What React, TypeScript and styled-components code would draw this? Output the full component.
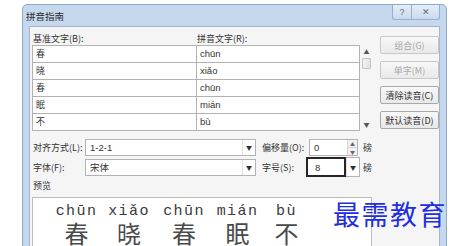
import styled, { createGlobalStyle } from "styled-components";

const GlobalStyle = createGlobalStyle`
    html, body {
        margin: 0;
        padding: 0;
        background: #ffffff;
        overflow: hidden;
    }
    * {
        box-sizing: border-box;
    }
`;

const UI_FONT = `"Noto Sans CJK SC", "Liberation Sans", sans-serif`;

const Screen = styled.div`
    position: relative;
    width: 454px;
    height: 246px;
    overflow: hidden;
    padding: 4px 0 0 22px;
    background: #ffffff;
    font-family: ${UI_FONT};
    font-size: 9px;
    color: #333;
`;

const Frame = styled.div`
    width: 425px;
    height: 270px;
    display: flex;
    flex-direction: column;
    padding: 0 6px;
    background: #c6d8ee;
    border: 1px solid #8fa9ca;
    border-radius: 5px 5px 0 0;
`;

const TitleBar = styled.div`
    height: 21px;
    display: flex;
    justify-content: space-between;
    align-items: flex-start;
`;

const Title = styled.div`
    margin: 5px 0 0 -3px;
    font-size: 9.5px;
    line-height: 12px;
    color: #2a2a2a;
`;

const TitleButtons = styled.div`
    display: flex;
`;

const TitleButton = styled.div<{ $w: number }>`
    width: ${(p) => p.$w}px;
    height: 15px;
    display: flex;
    align-items: center;
    justify-content: center;
    font-family: "Liberation Sans", sans-serif;
    font-size: 9px;
    color: #5a6d86;
    background: linear-gradient(#e4edf8, #cbdaee);
    border: 1px solid #98afcd;
    border-top: none;
    & + & {
        border-left: none;
    }
    &:first-child {
        border-bottom-left-radius: 3px;
    }
    &:last-child {
        border-bottom-right-radius: 3px;
    }
`;

const Content = styled.div`
    flex: 1;
    background: #f5f5f5;
    border: 1px solid #a3b7d1;
    border-bottom: none;
    padding: 6px 0 0 2px;
`;

const TopSection = styled.div`
    display: flex;
    gap: 7px;
`;

const LeftCol = styled.div`
    width: 341px;
`;

const LabelRow = styled.div`
    display: grid;
    grid-template-columns: 164px 164px;
    height: 12px;
    line-height: 12px;
`;

const Label = styled.span`
    padding-left: 1px;
    white-space: nowrap;
`;

const TableWrap = styled.div`
    display: flex;
`;

const Table = styled.div`
    width: 328px;
    display: grid;
    grid-template-columns: 164px 1fr;
    grid-auto-rows: 17px;
    border-left: 1px solid #b2b2b2;
    border-top: 1px solid #b2b2b2;
    background: #ffffff;
`;

const Cell = styled.div<{ $latin?: boolean }>`
    border-right: 1px solid #b2b2b2;
    border-bottom: 1px solid #b2b2b2;
    padding-left: 3px;
    line-height: 16px;
    font-family: ${(p) => (p.$latin ? `"Liberation Sans", sans-serif` : UI_FONT)};
    font-size: ${(p) => (p.$latin ? 9.5 : 9)}px;
    color: #333;
`;

const ScrollBar = styled.div`
    width: 13px;
    height: 86px;
    display: flex;
    flex-direction: column;
    align-items: center;
    padding: 3px 0;
    font-size: 6px;
    color: #555;
`;

const ScrollThumb = styled.div`
    width: 9px;
    height: 11px;
    margin-top: 3px;
    border: 1px solid #c4c4c4;
    background: linear-gradient(90deg, #f2f2f2, #e2e2e2);
    border-radius: 1px;
`;

const ScrollSpace = styled.div`
    flex: 1;
`;

const ScrollArrow = styled.span`
    line-height: 7px;
`;

const ButtonCol = styled.div`
    width: 59px;
    padding-top: 3px;
    display: flex;
    flex-direction: column;
    gap: 7px;
`;

const Button = styled.div<{ $disabled?: boolean }>`
    height: 18px;
    display: flex;
    align-items: center;
    justify-content: center;
    font-size: 9px;
    color: ${(p) => (p.$disabled ? "#a8a8a8" : "#2e2e2e")};
    border: 1px solid ${(p) => (p.$disabled ? "#c8c8c8" : "#a8a8a8")};
    border-radius: 2px;
    background: linear-gradient(#f8f8f8, #e9e9e9);
    white-space: nowrap;
`;

const Options = styled.div`
    margin-top: 6px;
    padding-left: 1px;
    display: grid;
    grid-template-columns: 52px 171px 50px 54px auto;
    grid-auto-rows: 20px;
    align-items: center;
`;

const OptLabel = styled.span<{ $pad?: number }>`
    padding-left: ${(p) => p.$pad ?? 0}px;
    white-space: nowrap;
`;

const Combo = styled.div<{ $h?: number }>`
    height: ${(p) => p.$h ?? 17}px;
    display: flex;
    background: #ffffff;
    border: 1px solid #b1b3b8;
`;

const ComboText = styled.div<{ $focus?: boolean }>`
    flex: 1;
    display: flex;
    align-items: center;
    padding-left: ${(p) => (p.$focus ? 7 : 4)}px;
    font-family: "Liberation Sans", ${UI_FONT};
    font-size: 9.5px;
    color: #333;
    ${(p) => p.$focus && `border: 2px solid #262626; margin: -1px 0 -1px -1px;`}
`;

const DropButton = styled.div`
    width: 13px;
    display: flex;
    align-items: center;
    justify-content: center;
    border-left: 1px solid #e2e2e2;
    font-size: 6px;
    color: #333;
`;

const SpinBox = styled.div`
    margin-left: 3px;
    height: 17px;
    width: 49px;
    display: flex;
    background: #ffffff;
    border: 1px solid #b1b3b8;
`;

const SpinButtons = styled.div`
    width: 10px;
    display: flex;
    flex-direction: column;
    border-left: 1px solid #d6d6d6;
`;

const SpinHalf = styled.div`
    flex: 1;
    display: flex;
    align-items: center;
    justify-content: center;
    font-size: 5px;
    color: #666;
    background: #f1f1f1;
    & + & {
        border-top: 1px solid #d6d6d6;
    }
`;

const Unit = styled.span`
    padding-left: 3px;
`;

const PreviewLabel = styled.div`
    margin-top: 3px;
    padding-left: 1px;
    height: 12px;
    line-height: 12px;
`;

const Preview = styled.div`
    margin-top: 5px;
    width: 340px;
    height: 60px;
    display: flex;
    padding: 6px 0 0 18px;
    background: #ffffff;
    border: 1px solid #bcbcbc;
`;

const Ruby = styled.div<{ $w: number }>`
    width: ${(p) => p.$w}px;
    display: flex;
    flex-direction: column;
    align-items: center;
`;

const Pinyin = styled.span`
    font-family: "Liberation Mono", monospace;
    font-size: 15px;
    line-height: 16px;
    letter-spacing: 1.4px;
    color: #3a3a3a;
`;

const Hanzi = styled.span`
    font-family: "Noto Sans CJK SC", sans-serif;
    font-size: 24px;
    line-height: 25px;
    color: #4a4a4a;
`;

const Watermark = styled.div`
    position: absolute;
    left: 333px;
    top: 199px;
    font-family: "Noto Sans CJK SC", sans-serif;
    font-size: 27px;
    line-height: 30px;
    letter-spacing: 1.5px;
    color: #1f2fe0;
`;

const rows = [
    ["春", "chūn"],
    ["晓", "xiǎo"],
    ["春", "chūn"],
    ["眠", "mián"],
    ["不", "bù"],
];

const preview = [
    { py: "chūn", hz: "春", w: 51 },
    { py: "xiǎo", hz: "晓", w: 54 },
    { py: "chūn", hz: "春", w: 56 },
    { py: "mián", hz: "眠", w: 51 },
    { py: "bù", hz: "不", w: 47 },
];

export default function App() {
    return (
        <Screen>
            <GlobalStyle />
            <Frame>
                <TitleBar>
                    <Title>拼音指南</Title>
                    <TitleButtons>
                        <TitleButton $w={20}>?</TitleButton>
                        <TitleButton $w={28}>✕</TitleButton>
                    </TitleButtons>
                </TitleBar>
                <Content>
                    <TopSection>
                        <LeftCol>
                            <LabelRow>
                                <Label>基准文字(B):</Label>
                                <Label>拼音文字(R):</Label>
                            </LabelRow>
                            <TableWrap>
                                <Table>
                                    {rows.flatMap(([hz, py], i) => [
                                        <Cell key={"h" + i}>{hz}</Cell>,
                                        <Cell key={"p" + i} $latin>{py}</Cell>,
                                    ])}
                                </Table>
                                <ScrollBar>
                                    <ScrollArrow>▲</ScrollArrow>
                                    <ScrollThumb />
                                    <ScrollSpace />
                                    <ScrollArrow>▼</ScrollArrow>
                                </ScrollBar>
                            </TableWrap>
                        </LeftCol>
                        <ButtonCol>
                            <Button $disabled>组合(G)</Button>
                            <Button $disabled>单字(M)</Button>
                            <Button>清除读音(C)</Button>
                            <Button>默认读音(D)</Button>
                        </ButtonCol>
                    </TopSection>

                    <Options>
                        <OptLabel>对齐方式(L):</OptLabel>
                        <Combo>
                            <ComboText>1-2-1</ComboText>
                            <DropButton>▼</DropButton>
                        </Combo>
                        <OptLabel $pad={6}>偏移量(O):</OptLabel>
                        <SpinBox>
                            <ComboText>0</ComboText>
                            <SpinButtons>
                                <SpinHalf>▲</SpinHalf>
                                <SpinHalf>▼</SpinHalf>
                            </SpinButtons>
                        </SpinBox>
                        <Unit>磅</Unit>

                        <OptLabel>字体(F):</OptLabel>
                        <Combo>
                            <ComboText>宋体</ComboText>
                            <DropButton>▼</DropButton>
                        </Combo>
                        <OptLabel $pad={6}>字号(S):</OptLabel>
                        <Combo $h={20}>
                            <ComboText $focus>8</ComboText>
                            <DropButton>▼</DropButton>
                        </Combo>
                        <Unit>磅</Unit>
                    </Options>

                    <PreviewLabel>预览</PreviewLabel>
                    <Preview>
                        {preview.map((p, i) => (
                            <Ruby key={i} $w={p.w}>
                                <Pinyin>{p.py}</Pinyin>
                                <Hanzi>{p.hz}</Hanzi>
                            </Ruby>
                        ))}
                    </Preview>
                </Content>
            </Frame>
            <Watermark>最需教育</Watermark>
        </Screen>
    );
}
